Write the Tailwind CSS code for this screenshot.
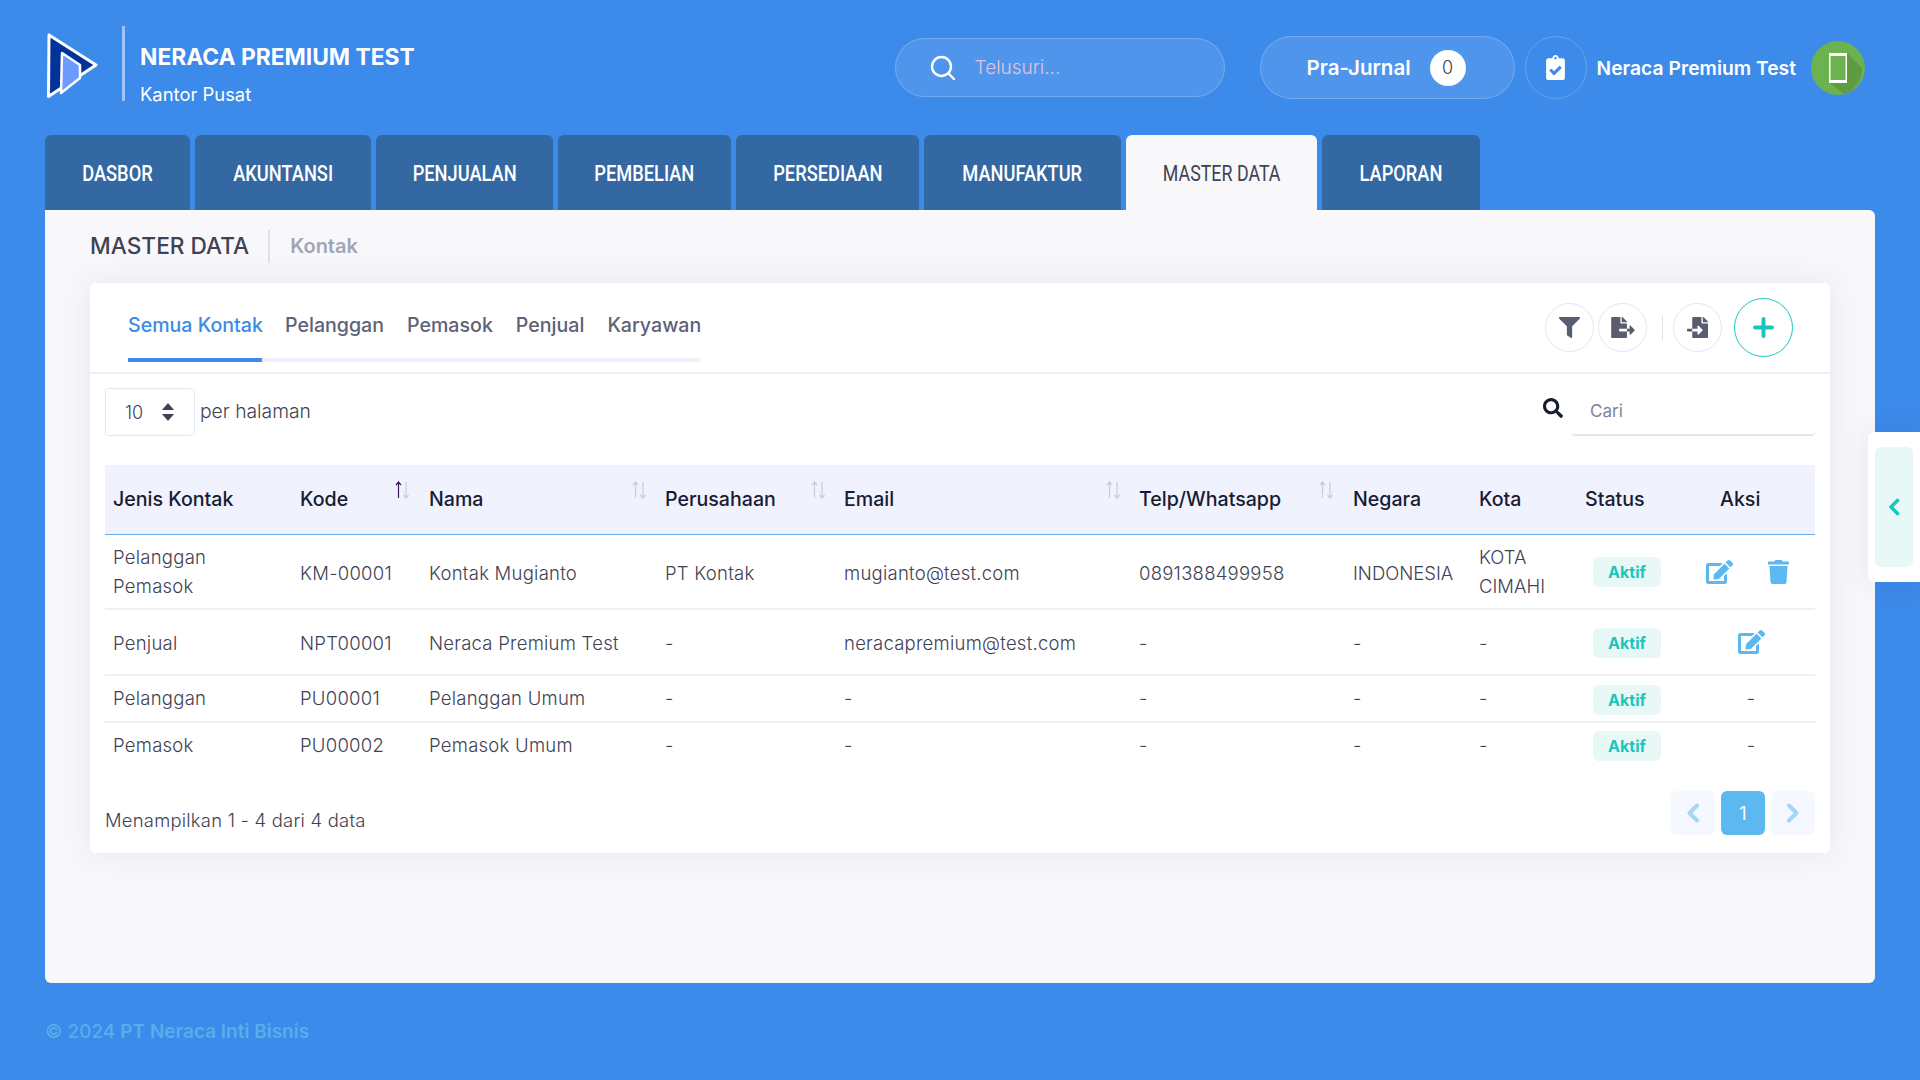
<!DOCTYPE html>
<html lang="id">
<head>
<meta charset="utf-8">
<title>Neraca Premium Test</title>
<script src="https://cdn.jsdelivr.net/npm/@tailwindcss/browser@4"></script>
</head>
<body class="w-[1920px] h-[1080px] overflow-hidden relative bg-[#3c8aea] [font-family:Inter,sans-serif] text-[#3f4254]">

<!-- header -->
<header class="h-[135px] flex items-start text-white">
  <svg class="ml-[45px] mt-[31px] w-[56px] h-[70px]" viewBox="0 0 56 70">
    <path d="M4 4 L51 34 L3.5 65.5 Z" fill="#003399" stroke="#fff" stroke-width="3" stroke-linejoin="round"/>
    <path d="M17 22 L35 34 L35 47 L16 62 Z" fill="#6e9bff" stroke="#fff" stroke-width="2.5" stroke-linejoin="round"/>
  </svg>
  <div class="ml-[21px] mt-[26px] w-[3px] h-[75px] bg-white/50"></div>
  <div class="ml-[15px] mt-[26px] h-[75px] flex flex-col">
    <div class="mt-[16px] text-[22.8px] leading-[30px] font-bold whitespace-nowrap">NERACA PREMIUM TEST</div>
    <div class="mt-[10px] text-[18.4px] leading-[24px]">Kantor Pusat</div>
  </div>
  <div class="ml-auto mt-[36px] flex items-center pr-[55px]">
    <div class="w-[330px] h-[59px] rounded-full bg-white/10 border border-white/20 flex items-center pl-[34px]">
      <svg class="w-[26px] h-[26px]" viewBox="0 0 26 26" fill="none" stroke="#fff" stroke-width="2.4" stroke-linecap="round"><circle cx="11.5" cy="11.5" r="9.5"/><path d="M18.5 18.5L24 24"/></svg>
      <span class="ml-[19px] pt-[2px] text-[19px] font-light text-[#e0c3e0]">Telusuri...</span>
    </div>
    <div class="ml-[35px] w-[255px] h-[63px] rounded-full bg-white/10 border border-white/20 flex items-center pl-[46px]">
      <span class="pt-[2px] text-[20.5px] font-semibold whitespace-nowrap">Pra-Jurnal</span>
      <span class="ml-[19px] w-[36px] h-[36px] rounded-full bg-white text-[#3f4254] text-[18px] font-light flex items-center justify-center">0</span>
    </div>
    <div class="ml-[10px] w-[62px] h-[63px] rounded-full border border-white/20 flex items-center justify-center">
      <svg class="w-[19px] h-[25px]" viewBox="0 0 384 512" fill="#fff"><path d="M336 64h-80c0-35.3-28.7-64-64-64s-64 28.7-64 64H48C21.5 64 0 85.5 0 112v352c0 26.5 21.5 48 48 48h288c26.5 0 48-21.5 48-48V112c0-26.5-21.5-48-48-48zM192 40c13.3 0 24 10.7 24 24s-10.7 24-24 24-24-10.7-24-24 10.7-24 24-24zm121.2 231.8l-143 141.8c-4.7 4.7-12.3 4.6-17-.1l-82.6-83.3c-4.7-4.7-4.6-12.3.1-17L99.1 285c4.7-4.7 12.3-4.6 17 .1l46 46.4 106-105.2c4.7-4.7 12.3-4.6 17 .1l28.2 28.4c4.7 4.8 4.6 12.3-.1 17z"/></svg>
    </div>
    <span class="ml-[10px] pt-[2px] text-[19.3px] font-semibold whitespace-nowrap">Neraca Premium Test</span>
    <svg class="ml-[15px] w-[54px] h-[54px]" viewBox="0 0 54 54">
      <circle cx="27" cy="27" r="27" fill="#6cb24e"/>
      <path d="M36 12 L51 27 A27 27 0 0 1 33 53.3 L19 42 Z" fill="#5f9b42"/>
      <rect x="18" y="12" width="18" height="30" fill="#fff"/>
      <rect x="19.5" y="15" width="15" height="24" fill="#6cb24e"/>
    </svg>
  </div>
</header>

<!-- main tabs -->
<nav class="ml-[45px] flex gap-[5px] h-[75px] [font-family:Roboto,sans-serif] text-[22px] font-medium text-white">
  <a class="w-[145px] pt-[2px] rounded-t-[6px] bg-[#3468a2] flex items-center justify-center"><span class="inline-block whitespace-nowrap scale-x-[0.83]">DASBOR</span></a>
  <a class="w-[176px] pt-[2px] rounded-t-[6px] bg-[#3468a2] flex items-center justify-center"><span class="inline-block whitespace-nowrap scale-x-[0.83]">AKUNTANSI</span></a>
  <a class="w-[177px] pt-[2px] rounded-t-[6px] bg-[#3468a2] flex items-center justify-center"><span class="inline-block whitespace-nowrap scale-x-[0.83]">PENJUALAN</span></a>
  <a class="w-[173px] pt-[2px] rounded-t-[6px] bg-[#3468a2] flex items-center justify-center"><span class="inline-block whitespace-nowrap scale-x-[0.83]">PEMBELIAN</span></a>
  <a class="w-[183px] pt-[2px] rounded-t-[6px] bg-[#3468a2] flex items-center justify-center"><span class="inline-block whitespace-nowrap scale-x-[0.83]">PERSEDIAAN</span></a>
  <a class="w-[197px] pt-[2px] rounded-t-[6px] bg-[#3468a2] flex items-center justify-center"><span class="inline-block whitespace-nowrap scale-x-[0.83]">MANUFAKTUR</span></a>
  <a class="w-[191px] pt-[2px] rounded-t-[6px] bg-[#f8f8fb] text-[#3f4254] font-normal flex items-center justify-center"><span class="inline-block whitespace-nowrap scale-x-[0.81]">MASTER DATA</span></a>
  <a class="w-[158px] pt-[2px] rounded-t-[6px] bg-[#3468a2] flex items-center justify-center"><span class="inline-block whitespace-nowrap scale-x-[0.83]">LAPORAN</span></a>
</nav>

<!-- panel -->
<main class="ml-[45px] w-[1830px] h-[773px] bg-[#f8f8fb] rounded-b-[6px] rounded-tr-[6px] px-[45px]">
  <div class="h-[73px] flex items-center pb-[1px]">
    <span class="text-[22.7px] font-medium text-[#3f4254] whitespace-nowrap">MASTER DATA</span>
    <span class="ml-[19px] w-[2px] h-[33px] bg-[#dfe1ea]"></span>
    <span class="ml-[20px] text-[20px] font-semibold text-[#a1a5b7]">Kontak</span>
  </div>

  <section class="w-[1740px] h-[570px] bg-white rounded-[6px] shadow-[0_0_30px_rgba(82,63,105,0.1)]">
    <div class="h-[91px] border-b-2 border-[#eeeef3] relative flex items-start pl-[38px]">
      <div class="w-[572px] h-[79px] border-b-4 border-[#eff0f9] flex">
        <a class="w-[134px] h-[79px] pt-[30px] border-b-4 border-[#3c8aea] text-[#3c8aea] text-[19.6px] leading-[24px] font-medium whitespace-nowrap">Semua Kontak</a>
        <a class="ml-[23px] pt-[30px] text-[19.6px] leading-[24px] font-medium text-[#5e6278]">Pelanggan</a>
        <a class="ml-[23px] pt-[30px] text-[19.6px] leading-[24px] font-medium text-[#5e6278]">Pemasok</a>
        <a class="ml-[23px] pt-[30px] text-[19.6px] leading-[24px] font-medium text-[#5e6278]">Penjual</a>
        <a class="ml-[23px] pt-[30px] text-[19.6px] leading-[24px] font-medium text-[#5e6278]">Karyawan</a>
      </div>
      <div class="ml-auto mr-[37px] mt-[15px] flex items-center">
        <button class="w-[49px] h-[49px] rounded-full border border-[#e4e6ef] flex items-center justify-center"><svg class="w-[21px] h-[21px]" viewBox="0 0 512 512" fill="#5a5d70"><path d="M487.976 0H24.028C2.71 0-8.047 25.866 7.058 40.971L192 225.941V432c0 7.831 3.821 15.17 10.237 19.662l80 55.98C298.02 518.69 320 507.493 320 487.98V225.941l184.947-184.97C520.021 25.896 509.338 0 487.976 0z"/></svg></button>
        <button class="ml-[4px] w-[49px] h-[49px] rounded-full border border-[#e4e6ef] flex items-center justify-center"><svg class="w-[24px] h-[21px]" viewBox="0 0 576 512" fill="#5a5d70"><path d="M384 121.9c0-6.3-2.5-12.4-7-16.9L279.1 7c-4.5-4.5-10.6-7-17-7H256v128h128zM571 308l-95.7-96.4c-10.1-10.1-27.4-3-27.4 11.3V288h-64v64h64v65.2c0 14.3 17.3 21.4 27.4 11.3L571 332c6.6-6.6 6.6-17.4 0-24zm-379 28v-32c0-8.8 7.2-16 16-16h176V160H248c-13.2 0-24-10.8-24-24V0H24C10.7 0 0 10.7 0 24v464c0 13.3 10.7 24 24 24h336c13.3 0 24-10.7 24-24V352H208c-8.8 0-16-7.2-16-16z"/></svg></button>
        <span class="ml-[15px] w-[1px] h-[24px] bg-[#dfe1ea]"></span>
        <button class="ml-[10px] w-[49px] h-[49px] rounded-full border border-[#e4e6ef] flex items-center justify-center"><svg class="w-[21px] h-[21px]" viewBox="0 0 512 512" fill="#5a5d70"><path d="M16 288c-8.8 0-16 7.2-16 16v32c0 8.8 7.2 16 16 16h112v-64zm489-183L407.1 7c-4.5-4.5-10.6-7-17-7H384v128h128v-6.1c0-6.3-2.5-12.4-7-16.9zm-153 31V0H152c-13.3 0-24 10.7-24 24v264h128v-65.2c0-14.3 17.3-21.4 27.4-11.3L379 308c6.6 6.7 6.6 17.4 0 24l-95.7 96.4c-10.1 10.1-27.4 3-27.4-11.3V352H128v136c0 13.3 10.7 24 24 24h336c13.3 0 24-10.7 24-24V160H376c-13.2 0-24-10.8-24-24z"/></svg></button>
        <button class="ml-[12px] w-[59px] h-[59px] rounded-full border border-[#1bc5bd] flex items-center justify-center"><svg class="w-[21px] h-[21px]" viewBox="0 0 21 21" fill="none" stroke="#1bc5bd" stroke-width="4" stroke-linecap="round"><path d="M10.5 2v17M2 10.5h17"/></svg></button>
      </div>
    </div>

    <div class="h-[91px] flex items-start px-[15px] pt-[14px]">
      <div class="w-[90px] h-[48px] rounded-[4px] border border-[#e4e6ef] flex items-center pl-[19px] text-[18px] font-light">10
        <svg class="ml-[19px] w-[12px] h-[18px]" viewBox="0 0 12 18" fill="#3f4254"><path d="M6 0L12 7H0zM6 18L0 11H12z"/></svg>
      </div>
      <span class="ml-[5px] mt-[9px] text-[19.3px] font-light whitespace-nowrap">per halaman</span>
      <svg class="ml-auto mt-[10px] w-[20px] h-[20px]" viewBox="0 0 512 512" fill="#181c32"><path d="M505 442.7L405.3 343c-4.5-4.5-10.6-7-17-7H372c27.6-35.3 44-79.7 44-128C416 93.1 322.9 0 208 0S0 93.1 0 208s93.1 208 208 208c48.3 0 92.7-16.4 128-44v16.3c0 6.4 2.5 12.5 7 17l99.7 99.7c9.4 9.4 24.6 9.4 33.9 0l28.3-28.3c9.4-9.4 9.4-24.6.1-34zM208 336c-70.7 0-128-57.2-128-128 0-70.7 57.2-128 128-128 70.7 0 128 57.2 128 128 0 70.7-57.2 128-128 128z"/></svg>
      <div class="ml-[8px] w-[244px] h-[48px] pt-[2px] border-b-2 border-[#e4e6ef] rounded-b-[4px] flex items-center pl-[19px] text-[17px] text-[#7e8299]">Cari</div>
    </div>

    <table class="ml-[15px] w-[1710px] table-fixed border-collapse text-[18.5px] tracking-[0.25px] font-light text-[#3f4254]">
      <colgroup><col class="w-[187px]"><col class="w-[129px]"><col class="w-[236px]"><col class="w-[179px]"><col class="w-[295px]"><col class="w-[214px]"><col class="w-[126px]"><col class="w-[106px]"><col class="w-[110px]"><col class="w-[128px]"></colgroup>
      <thead>
        <tr class="h-[69px] bg-[#f0f2fe] border-b border-[#6aaeea] text-left text-[19.6px] tracking-normal text-[#181c32]">
          <th class="px-2 font-medium">Jenis Kontak</th>
          <th class="px-2 font-medium relative">Kode<svg class="absolute right-[11px] top-[16px] w-[15px] h-[18px]" viewBox="0 0 15 18" fill="none" stroke-width="1.2"><path d="M3.5 17V1M1 4l2.5-3L6 4" stroke="#3b1a5e"/><path d="M11 1v16M8.5 14l2.5 3 2.5-3" stroke="#c9ccd9"/></svg></th>
          <th class="px-2 font-medium relative">Nama<svg class="absolute right-[10px] top-[16px] w-[15px] h-[18px]" viewBox="0 0 15 18" fill="none" stroke-width="1.2" stroke="#c9ccd9"><path d="M3.5 17V1M1 4l2.5-3L6 4"/><path d="M11 1v16M8.5 14l2.5 3 2.5-3"/></svg></th>
          <th class="px-2 font-medium relative">Perusahaan<svg class="absolute right-[10px] top-[16px] w-[15px] h-[18px]" viewBox="0 0 15 18" fill="none" stroke-width="1.2" stroke="#c9ccd9"><path d="M3.5 17V1M1 4l2.5-3L6 4"/><path d="M11 1v16M8.5 14l2.5 3 2.5-3"/></svg></th>
          <th class="px-2 font-medium relative">Email<svg class="absolute right-[10px] top-[16px] w-[15px] h-[18px]" viewBox="0 0 15 18" fill="none" stroke-width="1.2" stroke="#c9ccd9"><path d="M3.5 17V1M1 4l2.5-3L6 4"/><path d="M11 1v16M8.5 14l2.5 3 2.5-3"/></svg></th>
          <th class="px-2 font-medium relative">Telp/Whatsapp<svg class="absolute right-[11px] top-[16px] w-[15px] h-[18px]" viewBox="0 0 15 18" fill="none" stroke-width="1.2" stroke="#c9ccd9"><path d="M3.5 17V1M1 4l2.5-3L6 4"/><path d="M11 1v16M8.5 14l2.5 3 2.5-3"/></svg></th>
          <th class="px-2 font-medium">Negara</th>
          <th class="px-2 font-medium">Kota</th>
          <th class="px-2 font-medium">Status</th>
          <th class="pl-[33px] font-medium">Aksi</th>
        </tr>
      </thead>
      <tbody>
        <tr class="h-[75px] border-b-2 border-[#f0f0f4]">
          <td class="px-2 pt-[2px] leading-[29px]">Pelanggan<br>Pemasok</td><td class="px-2 pt-[5px]">KM-00001</td><td class="px-2 pt-[5px]">Kontak Mugianto</td><td class="px-2 pt-[5px]">PT Kontak</td><td class="px-2 pt-[5px]">mugianto@test.com</td><td class="px-2 pt-[5px]">0891388499958</td><td class="px-2 pt-[5px] tracking-normal">INDONESIA</td><td class="px-2 pt-[2px] leading-[29px] tracking-normal">KOTA CIMAHI</td>
          <td class="pl-[16px]"><span class="inline-flex w-[68px] h-[30px] mt-[1px] items-center justify-center rounded-[6px] bg-[#e8f8f6] text-[#1bc5bd] text-[16px] tracking-normal font-bold">Aktif</span></td>
          <td class="pt-[2px]"><div class="flex items-center pl-[19px]"><svg class="w-[27px] h-[24px]" viewBox="0 0 576 512" fill="#5cb8ee"><path d="M402.6 83.2l90.2 90.2c3.8 3.8 3.8 10 0 13.8L274.4 405.6l-92.8 10.3c-12.4 1.4-22.9-9.1-21.5-21.5l10.3-92.8L388.8 83.2c3.8-3.8 10-3.8 13.8 0zm162-22.9l-48.8-48.8c-15.2-15.2-39.9-15.2-55.2 0l-35.4 35.4c-3.8 3.8-3.8 10 0 13.8l90.2 90.2c3.8 3.8 10 3.8 13.8 0l35.4-35.4c15.2-15.3 15.2-40 0-55.2zM384 346.2V448H64V128h229.8c3.2 0 6.2-1.3 8.5-3.5l40-40c7.6-7.6 2.2-20.5-8.5-20.5H48C21.5 64 0 85.5 0 112v352c0 26.5 21.5 48 48 48h352c26.5 0 48-21.5 48-48V306.2c0-10.7-12.9-16-20.5-8.5l-40 40c-2.2 2.3-3.5 5.3-3.5 8.5z"/></svg><svg class="ml-[35px] w-[21px] h-[24px]" viewBox="0 0 448 512" fill="#5cb8ee"><path d="M432 32H312l-9.4-18.7A24 24 0 0 0 281.1 0H166.8a23.72 23.72 0 0 0-21.4 13.3L136 32H16A16 16 0 0 0 0 48v32a16 16 0 0 0 16 16h416a16 16 0 0 0 16-16V48a16 16 0 0 0-16-16zM53.2 467a48 48 0 0 0 47.9 45h245.8a48 48 0 0 0 47.9-45L416 128H32z"/></svg></div></td>
        </tr>
        <tr class="h-[66px] border-b-2 border-[#f0f0f4]">
          <td class="px-2 pt-[3px]">Penjual</td><td class="px-2 pt-[3px]">NPT00001</td><td class="px-2 pt-[3px]">Neraca Premium Test</td><td class="px-2 pt-[3px]">-</td><td class="px-2 pt-[3px]">neracapremium@test.com</td><td class="px-2 pt-[3px]">-</td><td class="px-2 pt-[3px]">-</td><td class="px-2 pt-[3px]">-</td>
          <td class="pl-[16px]"><span class="inline-flex w-[68px] h-[30px] mt-[2px] items-center justify-center rounded-[6px] bg-[#e8f8f6] text-[#1bc5bd] text-[16px] tracking-normal font-bold">Aktif</span></td>
          <td><div class="flex justify-center pl-[1px]"><svg class="w-[27px] h-[24px]" viewBox="0 0 576 512" fill="#5cb8ee"><path d="M402.6 83.2l90.2 90.2c3.8 3.8 3.8 10 0 13.8L274.4 405.6l-92.8 10.3c-12.4 1.4-22.9-9.1-21.5-21.5l10.3-92.8L388.8 83.2c3.8-3.8 10-3.8 13.8 0zm162-22.9l-48.8-48.8c-15.2-15.2-39.9-15.2-55.2 0l-35.4 35.4c-3.8 3.8-3.8 10 0 13.8l90.2 90.2c3.8 3.8 10 3.8 13.8 0l35.4-35.4c15.2-15.3 15.2-40 0-55.2zM384 346.2V448H64V128h229.8c3.2 0 6.2-1.3 8.5-3.5l40-40c7.6-7.6 2.2-20.5-8.5-20.5H48C21.5 64 0 85.5 0 112v352c0 26.5 21.5 48 48 48h352c26.5 0 48-21.5 48-48V306.2c0-10.7-12.9-16-20.5-8.5l-40 40c-2.2 2.3-3.5 5.3-3.5 8.5z"/></svg></div></td>
        </tr>
        <tr class="h-[47px] border-b-2 border-[#f0f0f4]">
          <td class="px-2">Pelanggan</td><td class="px-2">PU00001</td><td class="px-2">Pelanggan Umum</td><td class="px-2">-</td><td class="px-2">-</td><td class="px-2">-</td><td class="px-2">-</td><td class="px-2">-</td>
          <td class="pl-[16px]"><span class="inline-flex w-[68px] h-[30px] mt-[2px] items-center justify-center rounded-[6px] bg-[#e8f8f6] text-[#1bc5bd] text-[16px] tracking-normal font-bold">Aktif</span></td>
          <td class="text-center">-</td>
        </tr>
        <tr class="h-[46px]">
          <td class="px-2">Pemasok</td><td class="px-2">PU00002</td><td class="px-2">Pemasok Umum</td><td class="px-2">-</td><td class="px-2">-</td><td class="px-2">-</td><td class="px-2">-</td><td class="px-2">-</td>
          <td class="pl-[16px]"><span class="inline-flex w-[68px] h-[30px] items-center justify-center rounded-[6px] bg-[#e8f8f6] text-[#1bc5bd] text-[16px] tracking-normal font-bold">Aktif</span></td>
          <td class="text-center">-</td>
        </tr>
      </tbody>
    </table>

    <div class="mt-[23px] px-[15px] flex items-start">
      <span class="mt-[17px] text-[18.4px] tracking-[0.25px] leading-[24px] font-light whitespace-nowrap">Menampilkan 1 - 4 dari 4 data</span>
      <div class="ml-auto flex gap-[6px]">
        <span class="w-[44px] h-[44px] rounded-[6px] bg-[#f5f8fe] flex items-center justify-center"><svg class="w-[14px] h-[20px]" viewBox="0 0 14 20" fill="none" stroke="#a5d6f5" stroke-width="4" stroke-linecap="round" stroke-linejoin="round"><path d="M11 2.5L3.5 10 11 17.5"/></svg></span>
        <span class="w-[44px] h-[44px] rounded-[6px] bg-[#5cb8ee] text-white text-[18px] flex items-center justify-center">1</span>
        <span class="w-[44px] h-[44px] rounded-[6px] bg-[#f5f8fe] flex items-center justify-center"><svg class="w-[14px] h-[20px]" viewBox="0 0 14 20" fill="none" stroke="#a5d6f5" stroke-width="4" stroke-linecap="round" stroke-linejoin="round"><path d="M3 2.5L10.5 10 3 17.5"/></svg></span>
      </div>
    </div>
  </section>
</main>

<footer class="ml-[45px] mt-[36px] pt-[1px] text-[19px] leading-[24px] font-medium text-[#53b0ea] whitespace-nowrap">© 2024 <span class="font-semibold">PT Neraca Inti Bisnis</span></footer>

<!-- side drawer -->
<aside class="absolute left-[1868px] top-[432px] w-[52px] h-[150px] bg-white rounded-l-[6px] py-[15px] pl-[7px] pr-[7px] shadow-[0_0_30px_rgba(82,63,105,0.1)]">
  <div class="w-[38px] h-[120px] rounded-[6px] bg-[#e8f8f6] flex items-center justify-center"><svg class="w-[12px] h-[18px]" viewBox="0 0 12 18" fill="none" stroke="#1bc5bd" stroke-width="3.6" stroke-linecap="round" stroke-linejoin="round"><path d="M9.5 2.5L3 9l6.5 6.5"/></svg></div>
</aside>
</body>
</html>
